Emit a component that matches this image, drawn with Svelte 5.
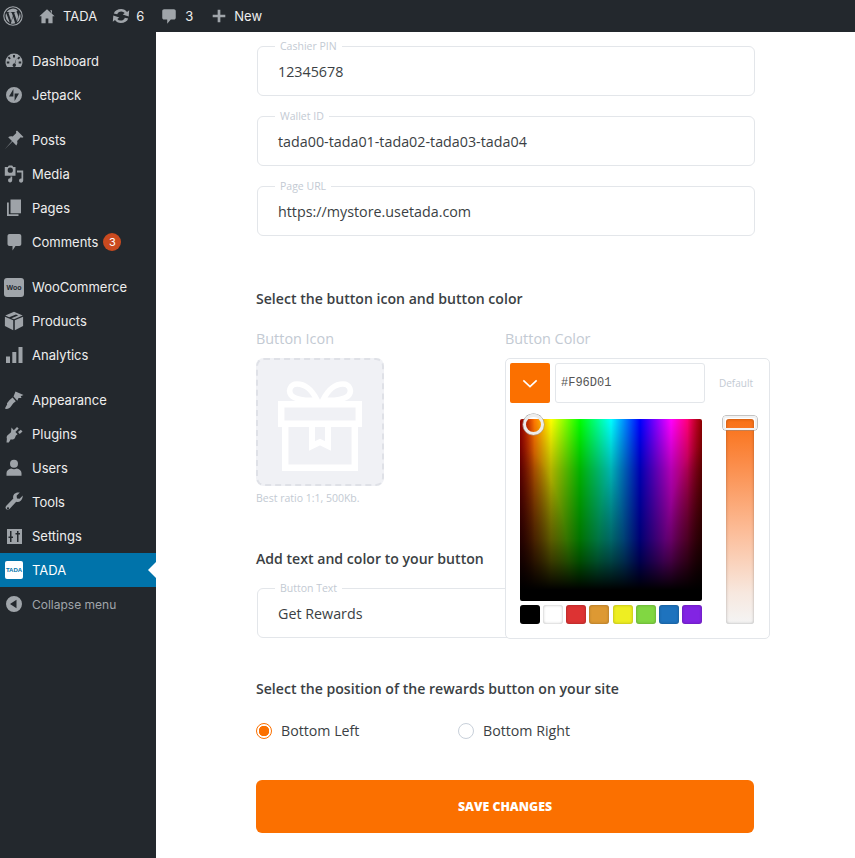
<script>
  const menu = [
    [{ n: 'Dashboard', i: 'dash' }, { n: 'Jetpack', i: 'jet' }],
    [{ n: 'Posts', i: 'pin' }, { n: 'Media', i: 'media' }, { n: 'Pages', i: 'pages' }, { n: 'Comments', i: 'comment', badge: 3 }],
    [{ n: 'WooCommerce', i: 'woo' }, { n: 'Products', i: 'box' }, { n: 'Analytics', i: 'bars' }],
    [{ n: 'Appearance', i: 'brush' }, { n: 'Plugins', i: 'plug' }, { n: 'Users', i: 'user' }, { n: 'Tools', i: 'wrench' }, { n: 'Settings', i: 'sliders' }, { n: 'TADA', i: 'tada', active: true }, { n: 'Collapse menu', i: 'collapse', dim: true }]
  ];
  const fields = [['Cashier PIN', '12345678'], ['Wallet ID', 'tada00-tada01-tada02-tada03-tada04'], ['Page URL', 'https://mystore.usetada.com']];
  const swatches = ['#000000', '#ffffff', '#dd3333', '#dd9933', '#eeee22', '#81d742', '#1e73be', '#8224e3'];
</script>

<div class="page">
  <header class="bar">
    <svg class="wp" viewBox="0 0 20 20"><circle cx="10" cy="10" r="9.2" fill="none" stroke="currentColor" stroke-width="1.1"/><path fill="currentColor" d="M2.6 10c0 2.9 1.7 5.5 4.2 6.700L3.200 6.900A7.400 7.400 0 0 0 2.600 10zm12.300-.4c0-.9-.3-1.600-.6-2.100-.4-.6-.7-1.100-.7-1.700 0-.7.500-1.300 1.200-1.300h.1A7.400 7.400 0 0 0 3.700 6.100h.5c.8 0 2-.1 2-.1.400 0 .5.600.1.600 0 0-.4 0-.9.100l2.800 8.400 1.700-5.100-1.200-3.300c-.4 0-.8-.1-.8-.1-.4 0-.4-.6 0-.6 0 0 1.300.1 2 .1.800 0 2-.1 2-.1.400 0 .5.600.1.600 0 0-.4 0-.9.100l2.800 8.300.8-2.600c.3-1.100.6-1.900.6-2.600zM10.100 10.700l-2.300 6.700a7.400 7.400 0 0 0 4.500-.1l-.1-.1zm6.400-4.300.1.800c0 .8-.1 1.600-.6 2.800l-2.300 6.600a7.400 7.400 0 0 0 2.800-10.200z"/></svg>
    <div class="bar-item home">
      <svg viewBox="0 0 20 20" class="bi"><path fill="currentColor" d="M15.500 7.600 10 2.500 1.500 10.300h2.300V18h4.700v-5.200h3V18h4.700v-7.700h2.300l-3-2.800V3.500h-2z"/></svg>
      <span>TADA</span>
    </div>
    <div class="bar-item upd">
      <svg viewBox="0 0 20 20" class="bi up"><path fill="currentColor" d="M10.200 3c2.400 0 4.500 1.100 5.800 2.900l2.200-1.700-.5 6.400-6-2 2-1.500a4.200 4.200 0 0 0-3.500-1.700c-1.900 0-3.500 1.200-4 2.900L2.800 7.500C3.700 4.700 6.700 3 10.200 3zm-.4 14c-2.400 0-4.500-1.100-5.800-2.900l-2.200 1.700.5-6.400 6 2-2 1.500a4.200 4.200 0 0 0 3.500 1.700c1.900 0 3.500-1.200 4-2.900l3.400.8C16.300 15.300 13.300 17 9.800 17z"/></svg>
      <span>6</span>
    </div>
    <div class="bar-item com">
      <svg viewBox="0 0 20 20" class="bi"><path fill="currentColor" d="M4.500 2.500h11c1.100 0 2 .9 2 2V12c0 1.100-.9 2-2 2H12l-4 4.500V14H4.500c-1.100 0-2-.9-2-2V4.500c0-1.100.9-2 2-2z"/></svg>
      <span>3</span>
    </div>
    <div class="bar-item new">
      <svg viewBox="0 0 20 20" class="bi"><path fill="currentColor" d="M8.500 3h3v5.500H17v3h-5.500V17h-3v-5.500H3v-3h5.500z"/></svg>
      <span>New</span>
    </div>
  </header>

  <div class="body">
    <nav class="side">
      {#each menu as group}
        <ul>
          {#each group as it}
            <li class:active={it.active} class:dim={it.dim}>
              <span class="ic">
                {#if it.i === 'dash'}
                  <svg viewBox="0 0 20 20"><path fill="currentColor" fill-rule="evenodd" d="M10 2.500a8.500 8.500 0 0 0-8.500 8.500c0 1.800.6 3.500 1.600 5h13.800c1-1.500 1.600-3.200 1.600-5A8.500 8.500 0 0 0 10 2.500zM9 4h2v2.500H9zM5 5.500 6.800 7.300 5.500 8.600 3.700 6.800zm10 0 1.300 1.300-1.800 1.800-1.300-1.300zM2.800 10.500h2.500v2H2.800zm11.900 0h2.500v2h-2.500zm-2.200-3.500-1.300 5.700a1.700 1.700 0 1 1-2.100.2c.4-.4 1-.5 1.500-.4z"/></svg>
                {:else if it.i === 'jet'}
                  <svg viewBox="0 0 20 20"><path fill="currentColor" fill-rule="evenodd" d="M10 2a8 8 0 1 0 0 16 8 8 0 0 0 0-16zM9.400 4v7.500H5zm1.200 12V8.500H15z"/></svg>
                {:else if it.i === 'pin'}
                  <svg viewBox="0 0 20 20"><path fill="currentColor" d="M13 .5 19.500 7l-1.300.7-1.500-.4-3.600 3.600c.6 1.900.2 3.300-.8 4.500L8.500 11.600 1 19l7-7.900L4.200 7.300c1.200-1 2.600-1.400 4.500-.8l3.600-3.600-.4-1.500z"/></svg>
                {:else if it.i === 'media'}
                  <svg viewBox="0 0 20 20"><path fill="currentColor" fill-rule="evenodd" d="M.8 3h3l1-1.500h3.400l1 1.500h2.300v8.700H.8zM6.300 3.600a2.600 2.600 0 1 0 0 5.200 2.600 2.600 0 0 0 0-5.200zM13 6.500h6.200v10a2.100 2.100 0 1 1-1.700-2V8.500H13zM8.200 12.500v3.800a2.100 2.100 0 1 1-1.700-2v-1.800z"/></svg>
                {:else if it.i === 'pages'}
                  <svg viewBox="0 0 20 20"><path fill="currentColor" d="M6.500 1.500H17v13.800H6.500z"/><path fill="currentColor" d="M3 4.500h1.800v11.800h9.700V18H3z"/></svg>
                {:else if it.i === 'comment'}
                  <svg viewBox="0 0 20 20"><path fill="currentColor" d="M4.500 2h9.800c1.100 0 2 .9 2 2v8c0 1.100-.9 2-2 2H10.500l-3 4.500V14h-3c-1.100 0-2-.9-2-2V4c0-1.100.9-2 2-2z" transform="translate(1 0)"/></svg>
                {:else if it.i === 'woo'}
                  <span class="woo"><span>Woo</span></span>
                {:else if it.i === 'box'}
                  <svg viewBox="0 0 20 20"><path fill="currentColor" d="M10 .8l8.700 3.700-8.700 3.700-2.600-1 6.700-2.800-2.100-.9-6.900 2.800-3.800-1.800zM.9 5.800l8.300 3.500v9.900L.9 15zm18.200 0V15l-8.300 4.200V9.300z"/></svg>
                {:else if it.i === 'bars'}
                  <svg viewBox="0 0 20 20"><path fill="currentColor" d="M2 11.500h4V18H2zM8.300 7h4v11h-4zM14.500 2h4v16h-4z"/></svg>
                {:else if it.i === 'brush'}
                  <svg viewBox="0 0 20 20"><path fill="currentColor" d="M11.500 1.500l8 3.500-2.800 1.200.8 1.800-3 .1-1.200 2.700L9.500 6.600zM8.600 7.500l3.200 3.700-2.500 2-2.400 3.400c-1.200 1.700-3.900 3-6 2L3.200 14.300c-.5-.6-.2-1.300.4-1.900l2-2.500z"/></svg>
                {:else if it.i === 'plug'}
                  <svg viewBox="0 0 20 20"><path fill="currentColor" d="M7.500 3.500l2.300 2.800 3.200-3.300 1.700 1.600-3.300 3.500 2.200 2.200-1.700 1.100-1.100 2.800c-1.100 1.400-2.700 1.700-4 1.100l-2 3.200H2.500l.4-3.800c-.5-1.100-.2-2.200.4-3.100L7 8.300zM14 8l2.800-2.200 1.700 1.600-2.800 2.700z"/></svg>
                {:else if it.i === 'user'}
                  <svg viewBox="0 0 20 20"><circle cx="10" cy="5.800" r="4" fill="currentColor"/><path fill="currentColor" d="M2.500 15c0-2.500 2.500-4 4.700-4.400 1.600 1 4 1 5.600 0 2.200.4 4.700 1.900 4.700 4.400v2.800h-15z"/></svg>
                {:else if it.i === 'wrench'}
                  <svg viewBox="0 0 20 20"><path fill="currentColor" fill-rule="evenodd" d="M18.800 3.500l-3.200 3.200-2.600-.3-.4-2.600 3.200-3.200c-2.100-.5-4.300 0-5.600 1.500-1.100 1.200-1.400 2.900-.9 4.500l-7 7.200c-1 1.100-1 2.400-.2 3.300.9 1 2.400 1 3.400 0l6.700-7.300c1.600.5 3.200.2 4.500-1 1.400-1.400 2.200-3.300 2-5.800zM4 17.400a1.100 1.100 0 1 1 0-2.200 1.100 1.100 0 0 1 0 2.200z"/></svg>
                {:else if it.i === 'sliders'}
                  <svg viewBox="0 0 20 20"><path fill="currentColor" fill-rule="evenodd" d="M3 3h15v15H3zm3 2v5.500H4.500V12H6v4h1.500v-4H9v-1.500H7.500V5zm7 0v2h-1.500v1.500H13V16h1.500V8.500H16V7h-1.500V5z"/></svg>
                {:else if it.i === 'tada'}
                  <span class="tada-logo"><span>TADA</span></span>
                {:else}
                  <svg viewBox="0 0 20 20"><path fill="currentColor" fill-rule="evenodd" d="M10 2a8 8 0 1 0 0 16 8 8 0 0 0 0-16zm2.500 3.800v8.400L6 10z"/></svg>
                {/if}
              </span>
              <span class="lbl">{it.n}</span>
              {#if it.badge}<span class="badge">{it.badge}</span>{/if}
              {#if it.active}<span class="arrow"></span>{/if}
            </li>
          {/each}
        </ul>
      {/each}
    </nav>

    <main class="main">
      <section class="fields">
        {#each fields as [label, value]}
          <div class="field"><span class="flabel">{label}</span><span class="fval">{value}</span></div>
        {/each}
      </section>

      <h3 class="h1">Select the button icon and button color</h3>

      <div class="two">
        <div class="icol">
          <div class="cap">Button Icon</div>
          <div class="drop">
            <svg viewBox="0 0 84 91" width="84" height="91">
              <g fill="none" stroke="#fff" stroke-width="6.500">
                <path d="M7.200 47v40.800h69.600V47"/>
                <path d="M3.200 24.200h77.600v19.600H3.200z"/>
                <path d="M39 20c-4-8-11-16-20-16-7 0-9 7-6 11 3 4 14 6 26 5zm6 0c4-8 11-16 20-16 7 0 9 7 6 11-3 4-14 6-26 5z" stroke-width="5.500"/>
                <path d="M34 46v20l8-4 8 4V46" stroke-width="6"/>
              </g>
            </svg>
          </div>
          <div class="hint">Best ratio 1:1, 500Kb.</div>
        </div>
        <div class="ccol">
          <div class="cap">Button Color</div>
          <div class="picker">
            <div class="ptop">
              <span class="pbtn"><svg viewBox="0 0 18 10" width="16" height="9"><path d="M1.500 1.500 9 8.500l7.500-7" fill="none" stroke="#fff" stroke-width="1.800"/></svg></span>
              <span class="pinput">#F96D01</span>
              <span class="pdef">Default</span>
            </div>
            <div class="pbody">
              <div class="pleft">
                <div class="sq"><span class="knob"></span></div>
                <div class="swatches">
                  {#each swatches as c}
                    <span class="sw" style="background:{c}"></span>
                  {/each}
                </div>
              </div>
              <div class="slider"><span class="thumb"></span></div>
            </div>
          </div>
        </div>
      </div>

      <h3 class="h2">Add text and color to your button</h3>
      <div class="field f4"><span class="flabel">Button Text</span><span class="fval">Get Rewards</span></div>

      <h3 class="h3">Select the position of the rewards button on your site</h3>
      <div class="radios">
        <label class="radio"><span class="dot on"></span>Bottom Left</label>
        <label class="radio"><span class="dot"></span>Bottom Right</label>
      </div>

      <button class="save">SAVE CHANGES</button>
    </main>
  </div>
</div>

<style>
  :global(body) { margin: 0; background: #fff; }
  .page { width: 855px; height: 858px; overflow: hidden; display: flex; flex-direction: column; font-family: "Open Sans", "Noto Sans", sans-serif; }
  .bar { height: 32px; flex: none; background: #23282d; color: #a0a5aa; display: flex; align-items: center; font-family: Inter, "Liberation Sans", sans-serif; font-size: 13px; }
  .wp { width: 20px; height: 20px; margin-left: 3px; flex: none; }
  .bar-item { display: flex; align-items: center; }
  .bar-item span { color: #eee; font-weight: 400; }
  .bi { width: 18px; height: 18px; flex: none; }
  .up { width: 20px; height: 20px; }
  .home { margin-left: 15px; gap: 7px; }
  .upd { margin-left: 14px; gap: 5px; }
  .com { margin-left: 16px; gap: 7px; }
  .new { margin-left: 17px; gap: 6px; }
  .body { flex: 1; display: flex; min-height: 0; }
  .side { width: 156px; flex: none; background: #23282d; padding-top: 12px; font-family: Inter, "Liberation Sans", sans-serif; font-size: 13px; color: #eee; }
  .side ul { list-style: none; margin: 0 0 11px; padding: 0; }
  .side li { height: 34px; display: flex; align-items: center; position: relative; }
  .ic { width: 32px; flex: none; display: flex; justify-content: flex-start; align-items: center; padding-left: 4px; box-sizing: border-box; color: #9ea3a8; }
  .ic svg { width: 20px; height: 20px; display: block; }
  .active { background: #0073aa; color: #fff; }
  .dim { color: #a0a5aa; font-size: 12px; }
  .dim .ic { color: #a0a5aa; }
  .badge { margin-left: 5px; width: 18px; height: 18px; border-radius: 50%; background: #ca4a1f; color: #fff; font-size: 11px; display: flex; align-items: center; justify-content: center; }
  .arrow { position: absolute; right: 0; top: 9px; border: 8px solid transparent; border-right-color: #fff; border-left: 0; }
  .woo { width: 20px; height: 19px; background: #a0a5aa; border-radius: 3px; display: flex; align-items: center; justify-content: center; color: #23282d; font: 700 7px "Liberation Sans", sans-serif; }
  .tada-logo { width: 18px; height: 18px; background: #fff; border-radius: 2px; display: flex; align-items: center; justify-content: center; color: #0073aa; font: 700 6px "Liberation Sans", sans-serif; margin-left: 1px; }

  .main { flex: 1; min-width: 0; padding: 14px 0 0 100px; color: #3b3f44; position: relative; }
  .fields { display: flex; flex-direction: column; gap: 20px; }
  .field { width: 498px; margin-left: 1px; height: 50px; box-sizing: border-box; border: 1px solid #e3e6ea; border-radius: 6px; position: relative; display: flex; align-items: center; padding-left: 20px; background: #fff; }
  .flabel { position: absolute; left: 17px; top: -8px; background: #fff; padding: 0 5px; font-size: 10.500px; line-height: 14px; color: #c3cad3; }
  .fval { font-size: 14.300px; color: #3b3f44; }
  h3 { margin: 0; font-size: 14.100px; line-height: 20px; font-weight: 600; color: #3b3f44; }
  .h1 { margin-top: 53px; }
  .two { display: flex; margin-top: 20px; height: 220px; }
  .icol { width: 249px; flex: none; }
  .cap { font-size: 14.400px; line-height: 20px; color: #c3cad3; height: 20px; }
  .drop { width: 128px; height: 128px; box-sizing: border-box; margin-top: 9px; padding-top: 7px; border: 2px dashed #dfe1e7; border-radius: 8px; background: #f0f1f5; display: flex; align-items: center; justify-content: center; }
  .hint { margin-top: 5px; font-size: 10.500px; line-height: 14px; color: #c3cad3; }
  .ccol { position: relative; }
  .picker { position: absolute; left: 0; top: 29px; width: 265px; height: 281px; box-sizing: border-box; background: #fff; border: 1px solid #e3e6ea; border-radius: 5px; padding: 4px; z-index: 2; }
  .ptop { display: flex; align-items: center; }
  .pbtn { width: 40px; height: 40px; border-radius: 2px; background: #fb7000; display: flex; align-items: center; justify-content: center; }
  .pinput { width: 150px; height: 40px; box-sizing: border-box; margin-left: 5px; border: 1px solid #e3e6ea; border-radius: 3px; display: flex; align-items: center; padding-left: 5px; font: 12px "Liberation Mono", monospace; color: #555; }
  .pdef { margin-left: 14px; font-size: 10px; color: #c3cad3; }
  .pbody { display: flex; margin-top: 16px; padding-left: 10px; }
  .pleft { width: 182px; flex: none; }
  .sq { width: 182px; height: 182px; position: relative; border-radius: 2px;
    background:
      linear-gradient(to bottom, transparent 0, rgba(0,0,0,.3) 28%, rgba(0,0,0,.55) 66%, rgba(0,0,0,.7) 78%, rgba(0,0,0,.9) 89%, #000 94%),
      radial-gradient(ellipse 28% 85% at 0 100%, rgba(0,0,0,.75), transparent),
      radial-gradient(ellipse 22% 85% at 100% 100%, rgba(0,0,0,.75), transparent),
      radial-gradient(ellipse 8% 70% at 50% 100%, rgba(0,0,0,.2), transparent),
      linear-gradient(to right, rgba(0,0,0,.45), transparent 8%, transparent 92%, rgba(0,0,0,.45)),
      linear-gradient(to right, #f00 0, #ff0 17%, #0f0 33%, #0ff 50%, #00f 66%, #f0f 83%, #f00 100%);
  }
  .knob { position: absolute; left: 3px; top: -5px; width: 21px; height: 21px; box-sizing: border-box; border-radius: 50%; border: 3px solid #ececec; box-shadow: 0 0 0 .5px #999; }
  .swatches { display: flex; justify-content: space-between; margin-top: 4px; }
  .sw { width: 20px; height: 19px; border-radius: 3px; box-sizing: border-box; box-shadow: inset 0 0 3px rgba(0,0,0,.3); }
  .slider { width: 28px; height: 205px; margin-left: 24px; position: relative; border-radius: 3px; background: linear-gradient(to bottom, #f97015, #fb8a45 20%, #fcbd99 55%, #f7e8df 85%, #f4f4f4); box-shadow: inset 0 0 3px rgba(0,0,0,.3); }
  .thumb { position: absolute; left: -3px; top: -3px; width: 34px; height: 14px; box-sizing: border-box; border: 2px solid #f2f2f2; border-radius: 3px; box-shadow: 0 0 0 .5px #888; }
  .h2 { margin-top: 0; }
  .f4 { margin-top: 19px; }
  .h3 { margin-top: 41px; }
  .radios { display: flex; margin-top: 22px; }
  .radio { display: flex; align-items: center; gap: 9px; width: 202px; font-size: 14.200px; color: #3b3f44; line-height: 20px; }
  .dot { width: 16px; height: 16px; box-sizing: border-box; border-radius: 50%; border: 1px solid #c8d0da; background: #fff; flex: none; }
  .dot.on { border: 1.500px solid #fb7000; background: radial-gradient(circle, #fb7000 0 5px, #fff 5.500px); }
  .save { display: block; width: 498px; height: 53px; margin-top: 39px; border: 0; border-radius: 6px; background: #fb7000; color: #fff; font: 800 12.300px "Open Sans", sans-serif; }
</style>
